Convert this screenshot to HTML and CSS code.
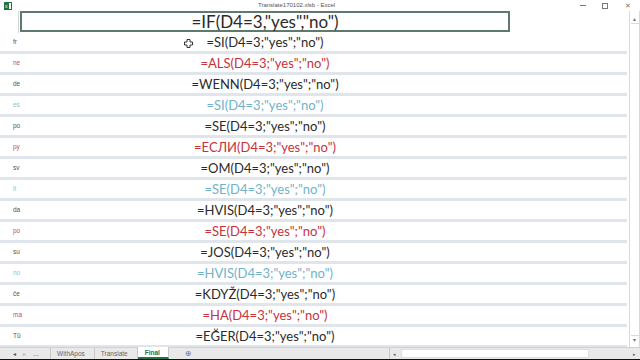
FILE: index.html
```html
<!DOCTYPE html>
<html>
<head>
<meta charset="utf-8">
<link rel="stylesheet" href="styles.css">
</head>
<body>
<div class="window">
  <div class="titlebar">
    <svg class="xl" viewBox="0 0 8 8" width="8" height="8"><rect x="0.5" y="0.5" width="7" height="7" fill="#fff" stroke="#217346"/><rect x="0" y="1" width="5" height="6" fill="#217346"/><text x="1" y="6" font-size="5" fill="#fff" font-family="Liberation Sans, sans-serif">x</text></svg>
    <span class="title">Translate170102.xlsb - Excel</span>
    <div class="winbtns">
      <span class="wb min"></span>
      <span class="wb restore"></span>
      <span class="wb close">✕</span>
    </div>
  </div>
  <div class="sheet">
    <div class="grid">
      <div class="row head">
        <div class="lbl"></div>
        <div class="cell big"><span>=IF(D4=3,"yes","no")</span></div>
        <div class="rest"></div>
      </div>
      <div class="row k"><div class="lbl">fr</div><div class="cell">=SI(D4=3;"yes";"no")</div><div class="rest"></div></div>
      <div class="row r"><div class="lbl">ne</div><div class="cell">=ALS(D4=3;"yes";"no")</div><div class="rest"></div></div>
      <div class="row k"><div class="lbl">de</div><div class="cell">=WENN(D4=3;"yes";"no")</div><div class="rest"></div></div>
      <div class="row b"><div class="lbl">es</div><div class="cell">=SI(D4=3;"yes";"no")</div><div class="rest"></div></div>
      <div class="row k"><div class="lbl">po</div><div class="cell">=SE(D4=3;"yes";"no")</div><div class="rest"></div></div>
      <div class="row r"><div class="lbl">py</div><div class="cell">=ЕСЛИ(D4=3;"yes";"no")</div><div class="rest"></div></div>
      <div class="row k"><div class="lbl">sv</div><div class="cell">=OM(D4=3;"yes";"no")</div><div class="rest"></div></div>
      <div class="row b"><div class="lbl">it</div><div class="cell">=SE(D4=3;"yes";"no")</div><div class="rest"></div></div>
      <div class="row k"><div class="lbl">da</div><div class="cell">=HVIS(D4=3;"yes";"no")</div><div class="rest"></div></div>
      <div class="row r"><div class="lbl">po</div><div class="cell">=SE(D4=3;"yes";"no")</div><div class="rest"></div></div>
      <div class="row k"><div class="lbl">su</div><div class="cell">=JOS(D4=3;"yes";"no")</div><div class="rest"></div></div>
      <div class="row b"><div class="lbl">no</div><div class="cell">=HVIS(D4=3;"yes";"no")</div><div class="rest"></div></div>
      <div class="row k"><div class="lbl">če</div><div class="cell">=KDYŽ(D4=3;"yes";"no")</div><div class="rest"></div></div>
      <div class="row r"><div class="lbl">ma</div><div class="cell">=HA(D4=3;"yes";"no")</div><div class="rest"></div></div>
      <div class="row k"><div class="lbl">Tü</div><div class="cell">=EĞER(D4=3;"yes";"no")</div><div class="rest"></div></div>
    </div>
    <div class="vscroll">
      <span class="arr up">▴</span>
      <div class="vtrack"></div>
      <span class="arr dn">▾</span>
    </div>
  </div>
  <div class="tabbar">
    <div class="nav">
      <span class="navb">◂</span>
      <span class="navb dim">▸</span>
      <span class="navb">…</span>
    </div>
    <div class="tab">WithApos</div>
    <div class="tab">Translate</div>
    <div class="tab active">Final</div>
    <div class="add">⊕</div>
    <div class="spacer"></div>
    <div class="hscroll">
      <span class="harr">◂</span>
      <div class="thumb"></div>
      <div class="htrack"></div>
      <span class="harr">▸</span>
    </div>
  </div>
  <div class="bottomedge"></div>
  <svg class="cursor" viewBox="0 0 9 9" width="9" height="9"><path d="M3 0.5h3v2.5h2.5v3h-2.5v2.5h-3v-2.5h-2.5v-3h2.5z" fill="#fff" stroke="#333" stroke-width="1"/></svg>
</div>
</body>
</html>
```

FILE: styles.css
```css
html, body {
  margin: 0;
  padding: 0;
  width: 640px;
  height: 360px;
  overflow: hidden;
  background: #fff;
}
.window {
  position: relative;
  width: 640px;
  height: 360px;
  display: flex;
  flex-direction: column;
  font-family: Lato, "Open Sans", sans-serif;
}
.titlebar {
  height: 11px;
  display: flex;
  align-items: center;
  position: relative;
  background: #fff;
}
.xl {
  margin-left: 4px;
  display: block;
}
.title {
  position: absolute;
  left: 258px;
  top: 0;
  font-size: 6px;
  line-height: 10px;
  color: #555;
  font-family: "Liberation Sans", sans-serif;
}
.winbtns {
  margin-left: auto;
  display: flex;
  align-items: center;
  height: 10px;
}
.wb {
  width: 22px;
  height: 10px;
  display: flex;
  align-items: center;
  justify-content: center;
  color: #666;
  font-size: 7px;
}
.min::after {
  content: "";
  width: 6px;
  height: 1px;
  background: #777;
}
.restore::after {
  content: "";
  width: 4px;
  height: 4px;
  border: 1px solid #777;
}
.close {
  width: 24px;
  font-family: "DejaVu Sans", sans-serif;
  font-size: 7px;
  color: #777;
}
.sheet {
  display: flex;
  height: 336px;
}
.grid {
  width: 628px;
  display: flex;
  flex-direction: column;
}
.row {
  display: flex;
  height: 18px;
  border-bottom: 3px solid #e0e4eb;
  align-items: center;
  flex: none;
}
.row.head {
  height: 22px;
  border-bottom: none;
  align-items: stretch;
}
.row.head .lbl {
  border-right: 1px solid #d4d4d4;
  width: 19px;
}
.lbl {
  width: 20px;
  flex: none;
  box-sizing: border-box;
  padding-left: 13px;
  font-size: 6.5px;
  font-family: "Liberation Sans", sans-serif;
  color: #555;
  line-height: 18px;
}
.cell {
  width: 490px;
  flex: none;
  text-align: center;
  font-size: 13px;
  line-height: 18px;
  color: #2a2a2a;
}
.big {
  width: 490px;
  box-sizing: border-box;
  border: 2px solid #5e7a6c;
  margin: 0 0 1px 1px;
  display: flex;
  align-items: center;
  justify-content: center;
  font-size: 17px;
  color: #2a2a2a;
}
.rest {
  flex: 1;
}
.row.r .cell { color: #c8323c; }
.row.r .lbl { color: #c8505a; }
.row.b .cell { color: #6fb3cb; }
.row.b .lbl { color: #8cc2d6; }
.vscroll {
  width: 9px;
  margin-left: 2px;
  display: flex;
  flex-direction: column;
  align-items: center;
  border-left: 1px solid #d9d9d9;
  border-right: 1px solid #d9d9d9;
  background: #fff;
}
.arr {
  font-size: 6px;
  color: #777;
  line-height: 8px;
  height: 8px;
  font-family: "DejaVu Sans", sans-serif;
}
.up { margin-top: 4px; }
.vtrack {
  flex: 1;
  width: 8px;
  border-top: 1px solid #d9d9d9;
  border-bottom: 1px solid #d9d9d9;
  background: #fff;
}
.dn { margin-bottom: 3px; }
.tabbar {
  height: 11px;
  display: flex;
  align-items: stretch;
  background: #e9e9e9;
  border-top: 1px solid #d0d0d0;
  font-family: "Liberation Sans", sans-serif;
  font-size: 6.5px;
  color: #666;
}
.nav {
  display: flex;
  align-items: center;
  padding-left: 13px;
  width: 37px;
  gap: 7px;
  border-right: 1px solid #c8c8c8;
}
.navb {
  font-size: 6px;
  color: #555;
  font-family: "DejaVu Sans", sans-serif;
}
.navb.dim { color: #bbb; }
.tab {
  display: flex;
  align-items: center;
  padding: 0 9px 0 6px;
  border-right: 1px solid #c8c8c8;
  color: #666;
}
.tab.active {
  background: #fff;
  color: #217346;
  font-weight: bold;
  padding: 0 8px 0 7px;
  border-bottom: 2px solid #217346;
  box-sizing: border-box;
  margin-top: -1px;
}
.add {
  display: flex;
  align-items: center;
  margin-left: 16px;
  font-size: 8px;
  color: #777;
  font-family: "DejaVu Sans", sans-serif;
}
.spacer { flex: 1; }
.hscroll {
  width: 246px;
  display: flex;
  align-items: center;
  border-left: 1px solid #c8c8c8;
  padding-left: 3px;
  margin-right: 1px;
}
.harr {
  font-size: 5px;
  color: #666;
  font-family: "DejaVu Sans", sans-serif;
  width: 6px;
}
.thumb {
  width: 186px;
  height: 7px;
  background: #fff;
  border: 1px solid #ddd;
  margin-left: 2px;
}
.htrack {
  flex: 1;
}
.bottomedge {
  flex: 1;
  background: #111;
}
.cursor {
  position: absolute;
  left: 184px;
  top: 39px;
}
```
